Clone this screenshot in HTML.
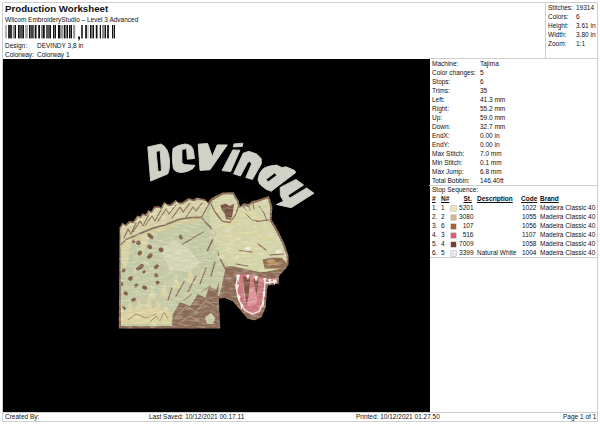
<!DOCTYPE html>
<html><head><meta charset="utf-8">
<style>
html,body{margin:0;padding:0;background:#fff;}
body{width:600px;height:424px;position:relative;overflow:hidden;font-family:"Liberation Sans",sans-serif;color:#111;}
.a{position:absolute;white-space:nowrap;line-height:1;}
.s{font-size:6.5px;}
.u{text-decoration:underline;}
.ln{position:absolute;background:#cfcfcf;}
svg{position:absolute;left:0;top:0;}
</style></head><body>
<div class="ln" style="left:2px;top:2px;width:596px;height:1px"></div>
<div class="ln" style="left:2px;top:2px;width:1px;height:420px"></div>
<div class="ln" style="left:597px;top:2px;width:1px;height:420px"></div>
<div class="ln" style="left:2px;top:421px;width:596px;height:1px"></div>
<div class="a" style="left:5px;top:3.5px;font-size:9.7px;font-weight:bold;">Production Worksheet</div>
<div class="a s" style="left:5px;top:17px;">Wilcom EmbroideryStudio – Level 3 Advanced</div>
<svg width="120" height="42" viewBox="0 0 120 42">
<rect x="5.25" y="25" width="1.5" height="13.4" fill="#999"/>
<rect x="8" y="25" width="4" height="13.4" fill="#333"/>
<rect x="12.75" y="25" width="2" height="13.4" fill="#888"/>
<rect x="14.75" y="25" width="1.25" height="13.4" fill="#111"/>
<rect x="18" y="25" width="1" height="13.4" fill="#111"/>
<rect x="19" y="25" width="4" height="13.4" fill="#555"/>
<rect x="23" y="25" width="1" height="13.4" fill="#111"/>
<rect x="25" y="25" width="3" height="13.4" fill="#aaa"/>
<rect x="29" y="25" width="1.25" height="13.4" fill="#111"/>
<rect x="30.25" y="25" width="2.75" height="13.4" fill="#444"/>
<rect x="33" y="25" width="1.5" height="13.4" fill="#666"/>
<rect x="35" y="25" width="1.5" height="13.4" fill="#111"/>
<rect x="38.25" y="25" width="1.75" height="13.4" fill="#111"/>
<rect x="41" y="25" width="1.75" height="13.4" fill="#888"/>
<rect x="42.75" y="25" width="2" height="13.4" fill="#111"/>
<rect x="46" y="25" width="4" height="13.4" fill="#555"/>
<rect x="50" y="25" width="1" height="13.4" fill="#111"/>
<rect x="53" y="25" width="1" height="13.4" fill="#111"/>
<rect x="54" y="25" width="1" height="13.4" fill="#777"/>
<rect x="55" y="25" width="1" height="13.4" fill="#111"/>
<rect x="58" y="25" width="2" height="13.4" fill="#111"/>
<rect x="60" y="25" width="3" height="13.4" fill="#999"/>
<rect x="63.75" y="25" width="1.25" height="13.4" fill="#111"/>
<rect x="65" y="25" width="2" height="13.4" fill="#777"/>
<rect x="67" y="25" width="1" height="13.4" fill="#111"/>
<rect x="69" y="25" width="1" height="13.4" fill="#111"/>
<rect x="70" y="25" width="1" height="13.4" fill="#666"/>
<rect x="71" y="25" width="1" height="13.4" fill="#111"/>
<rect x="73" y="25" width="2.25" height="13.4" fill="#999"/>
<rect x="81" y="25" width="2" height="13.4" fill="#444"/>
<rect x="85" y="25" width="2" height="13.4" fill="#333"/>
<rect x="87.5" y="25" width="1" height="13.4" fill="#aaa"/>
<rect x="90" y="25" width="1" height="13.4" fill="#111"/>
<rect x="91" y="25" width="2" height="13.4" fill="#777"/>
<rect x="93" y="25" width="1" height="13.4" fill="#111"/>
<rect x="95.75" y="25" width="1.75" height="13.4" fill="#111"/>
<rect x="99.75" y="25" width="1.25" height="13.4" fill="#111"/>
<rect x="102" y="25" width="3" height="13.4" fill="#888"/>
<rect x="105" y="25" width="1" height="13.4" fill="#111"/>
<rect x="107" y="25" width="2" height="13.4" fill="#333"/>
<rect x="112" y="25" width="1" height="13.4" fill="#111"/>
<rect x="113" y="25" width="1" height="13.4" fill="#999"/>
<rect x="114" y="25" width="1" height="13.4" fill="#111"/>
<path d="M78,36.6 h2 v2 q0,1.5 -1.6,2.2 l-0.4,-0.5 q0.8,-0.5 0.9,-1.2 h-0.9 z" fill="#222"/>
</svg>
<div class="a s" style="left:5px;top:42.5px;">Design:</div>
<div class="a s" style="left:37px;top:42.5px;">DEVINDY 3,8 in</div>
<div class="a s" style="left:5px;top:51.5px;">Colorway:</div>
<div class="a s" style="left:37px;top:51.5px;">Colorway 1</div>
<div class="ln" style="left:545px;top:2px;width:1px;height:57px"></div>
<div class="ln" style="left:429px;top:58px;width:169px;height:1px"></div>
<div class="a s" style="left:548px;top:4.5px;">Stitches:</div><div class="a s" style="left:576px;top:4.5px;">19314</div>
<div class="a s" style="left:548px;top:13.5px;">Colors:</div><div class="a s" style="left:576px;top:13.5px;">6</div>
<div class="a s" style="left:548px;top:22.5px;">Height:</div><div class="a s" style="left:576px;top:22.5px;">3.61 in</div>
<div class="a s" style="left:548px;top:31.5px;">Width:</div><div class="a s" style="left:576px;top:31.5px;">3.80 in</div>
<div class="a s" style="left:548px;top:40.5px;">Zoom:</div><div class="a s" style="left:576px;top:40.5px;">1:1</div>
<div style="position:absolute;left:3px;top:59px;width:427px;height:353px;background:#000;"></div>
<svg width="600" height="424" viewBox="0 0 600 424">
<defs>
<filter id="gr" x="100" y="190" width="200" height="140" filterUnits="userSpaceOnUse"><feTurbulence type="fractalNoise" baseFrequency="0.12 0.5" numOctaves="2" seed="11" result="n"/><feColorMatrix in="n" type="matrix" values="0 0 0 0 1  0 0 0 0 1  0 0 0 0 0.9  0 0 0 2.5 -1.1"/><feComposite in2="SourceGraphic" operator="in"/></filter>
<pattern id="st" width="1.6" height="1.6" patternUnits="userSpaceOnUse" patternTransform="rotate(40)"><rect width="1.6" height="0.6" fill="#4d4c30" opacity="0.13"/></pattern>
</defs>
<!-- hyena outer (brown edge) -->
<path fill="#8a6a55" d="M118.8,328.5 L119.5,227.5 L122.5,222.5 L125.0,224.8 L129.5,220.8 L133.0,221.5 L137.5,215.5 L140.0,216.5 L142.5,213.2 L145.5,214.5 L148.3,210.0 L151.0,211.5 L154.2,206.5 L158.3,206.0 L161.0,207.5 L164.2,201.8 L167.0,204.0 L170.0,204.5 L175.8,200.0 L178.0,202.5 L181.7,202.5 L188.3,198.3 L193.3,199.5 L196.7,197.5 L205.0,199.2 L208.0,202.5 L211,198.5 L222.3,192.4 L233.6,192.2 L238.6,200.8 L240,206.5 L244,203 L248,204.5 L252,201 L256.2,200.3 L269,196 L272.4,206.8 L271.5,219.5 L278.8,232 L285,245 L288.4,255.5 L288.6,264.5 L285,269.5 L279,276 L278.6,283.5 L267.7,285.5 L266.5,293 L265.8,306.8 L261.5,317 L254.5,320.3 L247.5,318.6 L239.3,308.5 L232.8,301.2 L224.8,297.8 L218.8,298.6 L220.3,328.5 Z"/>
<!-- body light fill -->
<path fill="#c8cda9" d="M121,326 L120.4,229.5 L123.4,224.5 L125.9,226.8 L130.4,222.8 L133.9,223.5 L138.4,217.5 L140.9,218.5 L143.4,215.2 L146.4,216.5 L149.2,212.0 L151.9,213.5 L155.1,208.5 L159.2,208.0 L161.9,209.5 L165.1,203.8 L167.9,206.0 L170.9,206.5 L176.7,202.0 L178.9,204.5 L182.6,204.5 L189.2,200.3 L194.2,201.5 L197.6,199.5 L205.9,201.2 L208.9,204.5 L212,200.8 L222.8,194.6 L233,194.4 L236.8,201.5 L238.6,208.5 L244,205.5 L248,206.8 L252,203.4 L256.6,202.5 L267.5,198.6 L270.2,207 L269.5,220.5 L277,233.5 L283,246 L286.4,256 L286.5,263.5 L282,268.5 L264,272 L236,270 L230,280 L218,296.5 L217,300 L218.6,326 Z"/>
<!-- mane cream with spikes -->
<path fill="#d9d4aa" d="M121,236 L120.4,229.5 L123.4,224.5 L125.9,226.8 L130.4,222.8 L133.9,223.5 L138.4,217.5 L140.9,218.5 L143.4,215.2 L146.4,216.5 L149.2,212.0 L151.9,213.5 L155.1,208.5 L159.2,208.0 L161.9,209.5 L165.1,203.8 L167.9,206.0 L170.9,206.5 L176.7,202.0 L178.9,204.5 L182.6,204.5 L189.2,200.3 L194.2,201.5 L197.6,199.5 L205.9,201.2 L208.9,204.5 L207,206 L204,216 L191,217.5 L178.9,219.5 L164.7,225 L153.4,228 L139.2,233.8 L126.5,239.6 L121,244 Z"/>
<path fill="none" stroke="#dbd09a" stroke-width="3" d="M121,247.5 L127,243 L140,237.2 L154,231.5 L165,228.5 L179,223 L191,221 L200,221"/>
<!-- mane brown strokes -->
<g fill="none" stroke="#8a6a55" stroke-linecap="round" stroke-linejoin="round">
<path stroke-width="1.6" d="M121,244 L126.5,239.6 L139.2,233.8 L153.4,228 L164.7,225 L178.9,219.5 L191,217.5 L201.5,217.4 L207.2,224 L212.8,229.6 L216,233 L210,245 L207.5,250.5"/>
<path stroke-width="1.1" d="M124,238 L128,229 L131,234 L136,223 M133,232 L140,221 L143,226 L149,214 M145,226 L152,216 L155,221 L161,210 M158,221 L166,209 L169,214 L176,205 M172,218 L180,207 L183,212 L190,203 M186,217 L193,207 L196,211 L202,203"/>
<path stroke-width="1.1" d="M201.5,217.4 L207.2,207 L211,201.3 M203.3,232 L193.4,237.7 L182,244.8"/>
<path stroke-width="1.2" d="M220.3,259 L226,270 L230,284.4 M217,243 L219,256"/>
</g>
<!-- texture -->
<path fill="url(#st)" d="M121,326.5 L121,229 L196,200 L233,194 L270,207 L286,256 L282,268.5 L236,270 L218,296.5 L218.6,326.5 Z"/>
<!-- cream streaks on body -->
<g fill="#dcd4a2" opacity="0.8">
<path d="M122,250 L126,240 L132,238 L128,262 L123,275 Z"/>
<path d="M140,236 L150,232 L146,246 L142,258 Z"/>
<path d="M226,238 L232,236 L236,248 L232,256 Z"/>
<path d="M148,298 L152,285 L156,300 Z M160,296 L165,280 L168,298 Z M172,290 L176,272 L180,288 Z M186,282 L190,266 L194,282 Z"/>
</g>
<g fill="#e2dfc4" opacity="0.5">
<path d="M160,250 L175,240 L190,250 L200,262 L190,272 L170,270 Z"/>
</g>
<!-- spots -->
<g fill="#7d5c48">
<ellipse cx="150.5" cy="236.3" rx="3.9" ry="2.0" transform="rotate(50 150.5 236.3)"/>
<ellipse cx="138.5" cy="242.7" rx="2.4" ry="2.2" transform="rotate(20 138.5 242.7)"/>
<ellipse cx="133.6" cy="241.3" rx="1.8" ry="1.8" transform="rotate(-50 133.6 241.3)"/>
<ellipse cx="149.8" cy="246.9" rx="2.5" ry="1.9" transform="rotate(20 149.8 246.9)"/>
<ellipse cx="139.9" cy="253.3" rx="2.6" ry="1.9" transform="rotate(-50 139.9 253.3)"/>
<ellipse cx="149.8" cy="256.1" rx="3.3" ry="2.0" transform="rotate(-50 149.8 256.1)"/>
<ellipse cx="161.1" cy="249.8" rx="2.3" ry="2.5" transform="rotate(-50 161.1 249.8)"/>
<ellipse cx="139.9" cy="267.4" rx="2.1" ry="4.6" transform="rotate(50 139.9 267.4)"/>
<ellipse cx="156.2" cy="266.7" rx="2.9" ry="1.9" transform="rotate(-35 156.2 266.7)"/>
<ellipse cx="156.2" cy="275.2" rx="2.1" ry="1.8" transform="rotate(35 156.2 275.2)"/>
<ellipse cx="130.6" cy="278.5" rx="2.5" ry="2.0" transform="rotate(-20 130.6 278.5)"/>
<ellipse cx="123.7" cy="270.3" rx="2.1" ry="1.8" transform="rotate(-50 123.7 270.3)"/>
<ellipse cx="157.6" cy="282.5" rx="2.1" ry="1.8" transform="rotate(-35 157.6 282.5)"/>
<ellipse cx="121.8" cy="284.0" rx="1.5" ry="1.9" transform="rotate(-20 121.8 284.0)"/>
<ellipse cx="136.2" cy="285.6" rx="2.4" ry="1.8" transform="rotate(-35 136.2 285.6)"/>
<ellipse cx="144.7" cy="287.7" rx="2.6" ry="1.9" transform="rotate(20 144.7 287.7)"/>
<ellipse cx="125.6" cy="293.3" rx="2.4" ry="1.8" transform="rotate(35 125.6 293.3)"/>
<ellipse cx="133.4" cy="299.7" rx="2.6" ry="1.8" transform="rotate(-20 133.4 299.7)"/>
<ellipse cx="123.5" cy="308.2" rx="2.4" ry="1.9" transform="rotate(35 123.5 308.2)"/>
<ellipse cx="180.7" cy="237.0" rx="2.6" ry="1.8" transform="rotate(50 180.7 237.0)"/>
<ellipse cx="144.0" cy="272.0" rx="1.8" ry="1.4" transform="rotate(-35 144.0 272.0)"/>
</g>
<!-- lower cream flames -->
<g fill="#dad09f">
<path d="M121,324 L121,306 L126,312 L130,300 L134,314 L139,298 L144,312 L149,296 L153,310 L158,299 L162,311 L166,304 L171,315 L171,324 Z"/>
<path d="M124,314 L140,308 L160,313 L170,318 L170,324 L122,324 Z"/>
</g>
<path fill="none" stroke="#a08468" stroke-width="0.9" d="M128,320 L136,314 L146,318 L156,314 M150,322 L156,316 L160,321 L164,312 L168,319"/>
<!-- lower brown shading -->
<path fill="#8a6b57" d="M172,326 L173,314 L180,302 L190.2,306 L197.9,294 L205.5,298 L209,286 L216.3,290 L219,282 L218,296.5 L217,300 L218.6,326 Z"/>
<g fill="none" stroke="#a9906f" stroke-width="1.2" stroke-linecap="round">
<path d="M175,318 L186,306 L196,312 L206,300 L214,306 M178,324 L190,316 L200,322 M184,300 L192,294 M202,292 L210,286"/>
</g>
<g fill="none" stroke="#8a6a55" stroke-width="1.2" stroke-linecap="round">
<path d="M176,296 L184,282 M188,292 L196,276 M200,284 L206,268 M211,276 L215,262 M168,300 L172,288"/>
</g>
<path fill="#c6c9a4" d="M205,317 L211,313 L215,318 L213,324 L207,324 Z"/>
<!-- head lighter cream area -->
<path fill="#d5d3a8" opacity="0.85" d="M209,212 L214,200 L222.8,195 L233,194.8 L238,208 L248,207 L256.6,203 L267.5,199 L270,207 L269.5,220.5 L277,233.5 L283,246 L286.4,256 L286.5,263.5 L282,268.5 L264,272 L236,270 L222,260 L214,244 Z"/>
<g fill="none" stroke="#e0d396" stroke-width="1.5" opacity="0.95" stroke-linecap="round" stroke-linejoin="round">
<path d="M222,240 L230,234 L236,240 L244,232 L252,236 M236,258 L244,252 L250,258 M224,226 L234,221 L240,224 M256,232 L264,240 L272,236 M242,216 L250,212 L258,218 M254,248 L262,243 M216,214 L220,206 M262,226 L270,230 M228,250 L234,246"/>
</g>
<g fill="none" stroke="#8a6a55" stroke-width="1" stroke-linecap="round">
<path d="M242,205 L246,210 M248,204 L250,210 M253,203 L254,209"/>
</g>
<g fill="none" stroke="#8a6a55" stroke-linecap="round" stroke-linejoin="round">
<path stroke-width="1.3" d="M211,204 L215,212 L222,221 L230,222.5 L236,214 L238.5,206"/>
<path stroke-width="1" d="M259,206 L264,213 L267,221 M246,214 L252,220 L258,221"/>
</g>
<!-- ear dark inner -->
<path fill="#7a5442" d="M220.5,205 L226,203.5 L229,206 L234,204 L233,212 L231,220.5 L226,219 L224.5,213 L221.5,210 Z"/>
<g fill="none" stroke="#8a6a55" stroke-width="1.1" stroke-linecap="round">
<path d="M256.2,221.8 L269,219.7 M239.2,250.5 L252,252 M270,255 L284,254 M236,264 L248,266 M258,244 L266,250"/>
</g>
<!-- face features -->
<path fill="#8f6a4e" d="M262.6,259.5 L272,257.5 L282,258 L286.5,263 L283,268.6 L264.7,268.6 Z"/>
<path fill="#b8925e" d="M266,261 L274,260 L278,264 L270,265.5 Z"/>
<path fill="#ecebe0" d="M243.5,248.5 L248,246.3 L252,248.2 L248,250.5 Z"/>
<path fill="#e6e2d0" d="M275.3,250.5 L280,249.2 L282.8,252.5 L277,253.7 Z"/>
<!-- mouth -->
<path fill="#8a6a55" d="M226,266 L231,266 L250,270 L266,274 L279,276 L278.6,283.5 L267.7,285.5 L266.5,293 L265.8,306.8 L261.5,317 L254.5,320.3 L247.5,318.6 L239.3,308.5 L232.8,301.2 L224.8,297.8 L218.8,298.6 L222,285 Z"/>
<path fill="none" stroke="#8a6a55" stroke-width="1.3" d="M220.3,259 L226,270 L224,285 L219,297"/>
<path fill="#c9777d" d="M237.5,274.5 L244,273.5 L253,275 L266,278 L277.5,279 L277.5,282 L266,283.5 L264.5,293 L263.5,305 L259.5,313.5 L252,315.5 L244,311 L238,300 L235.5,287 Z"/>
<path fill="#dd9098" d="M243,287 L252,289 L258,293 L256,304 L249,307 L244,300 Z"/>
<path fill="#7a5442" d="M243,276.5 L250,278 L248.5,297 L246.5,305 L244.5,292 Z M253.5,279 L258.5,280.5 L256.5,296 Z"/>
<path fill="none" stroke="#efece2" stroke-width="1.3" stroke-linejoin="round" d="M237.5,276 L236,287 L238.5,299 L244.5,310 L252,314 L259,311.5 L262.5,304 L264,293 L265,283 L277,281.5"/>
<g fill="#f2efe6">
<path d="M236,275 L240,274.5 L238.5,282 Z M235.5,284 L239,285 L237,291 Z M237,294 L240.5,296 L239,302 Z M240,303 L243.5,305 L241.5,310 Z M262,302 L264.5,300 L263.5,307 Z M262.5,292 L265.5,291 L264.5,298 Z"/>
<path d="M246,275 L249.5,274.5 L248,280 Z M254,276 L258,276 L256,282 Z M263,278 L266.5,278 L265,284 Z M268,279 L271.5,279 L270,285 Z M272.5,279.5 L276.5,279.5 L274.5,285 Z"/>
</g>
<g filter="url(#gr)" opacity="0.35"><path fill="#000" d="M118.8,328.5 L119.5,227.5 L122.5,222.5 L125.0,224.8 L129.5,220.8 L133.0,221.5 L137.5,215.5 L140.0,216.5 L142.5,213.2 L145.5,214.5 L148.3,210.0 L151.0,211.5 L154.2,206.5 L158.3,206.0 L161.0,207.5 L164.2,201.8 L167.0,204.0 L170.0,204.5 L175.8,200.0 L178.0,202.5 L181.7,202.5 L188.3,198.3 L193.3,199.5 L196.7,197.5 L205.0,199.2 L208.0,202.5 L211,198.5 L222.3,192.4 L233.6,192.2 L238.6,200.8 L240,206.5 L244,203 L248,204.5 L252,201 L256.2,200.3 L269,196 L272.4,206.8 L271.5,219.5 L278.8,232 L285,245 L288.4,255.5 L288.6,264.5 L285,269.5 L279,276 L278.6,283.5 L267.7,285.5 L266.5,293 L265.8,306.8 L261.5,317 L254.5,320.3 L247.5,318.6 L239.3,308.5 L232.8,301.2 L224.8,297.8 L218.8,298.6 L220.3,328.5 Z"/></g>
<!-- text -->
<g fill="#d0d2c7" fill-rule="evenodd" stroke="#d0d2c7" stroke-width="0.9" stroke-linejoin="round">
<path d="M147.8,147 L161,144 Q168.5,147.5 169.5,160 Q170,170 167.6,174 L150.6,181 Z M156.1,151.4 L160.2,150.6 L161.5,171 L158,171.4 Z"/>
<path d="M173,148.5 Q177,145 185,144 Q192.5,144.5 193.5,151 L194.5,158.5 L187.3,159.2 L186.6,148.6 L181.9,149.4 L181.9,163 L184.3,164.6 L195,165.3 L193,168.5 Q187,172.5 181,172.5 Q174.5,172 173.3,168 Q171.5,159 173,148.5 Z"/>
<path d="M198.2,144.2 L207.6,143.4 L212.3,156.5 L217.2,144.9 L227.3,144.9 L210,169.8 L200,170.4 Z"/>
<path d="M234,143.9 L242.9,143.2 L242.3,146.4 L233.4,147 Z M232.8,149.9 L240,150.2 L230.6,171.6 L222,170.6 Z"/>
<path d="M243.2,153.2 L248.8,151.3 L256.6,154 L261.3,158.7 L261.3,163.9 L252.4,179.4 L245.8,177.5 L251.6,164 L250,161.2 L247.8,162.2 L240.4,176 L233.6,173.8 Z"/>
<path d="M258,179.4 Q259,172 263.5,168.5 Q267,166 276.5,165.1 L281.8,167.5 L286,166.8 L294.6,170.4 L295.8,172.5 L271.2,191.3 L265.9,189.2 L259.6,184 Z M266.1,179.3 L274.8,172.8 L276.8,175.4 L268.1,182 Z"/>
<path d="M280.1,187.5 L296,179.4 L303.6,185 L288,195.2 L289.6,198.2 L306.6,188 L314,193.2 L291.2,207.7 L276.4,204.5 L283.5,201.3 L280.4,195.5 Z"/>
</g>

</svg>
<div class="a s" style="left:432px;top:60.7px;">Machine:</div><div class="a s" style="left:480px;top:60.7px;">Tajima</div>
<div class="a s" style="left:432px;top:69.7px;">Color changes:</div><div class="a s" style="left:480px;top:69.7px;">5</div>
<div class="a s" style="left:432px;top:78.7px;">Stops:</div><div class="a s" style="left:480px;top:78.7px;">6</div>
<div class="a s" style="left:432px;top:87.7px;">Trims:</div><div class="a s" style="left:480px;top:87.7px;">35</div>
<div class="a s" style="left:432px;top:96.7px;">Left:</div><div class="a s" style="left:480px;top:96.7px;">41.3 mm</div>
<div class="a s" style="left:432px;top:105.7px;">Right:</div><div class="a s" style="left:480px;top:105.7px;">55.2 mm</div>
<div class="a s" style="left:432px;top:114.7px;">Up:</div><div class="a s" style="left:480px;top:114.7px;">59.0 mm</div>
<div class="a s" style="left:432px;top:123.7px;">Down:</div><div class="a s" style="left:480px;top:123.7px;">32.7 mm</div>
<div class="a s" style="left:432px;top:132.7px;">EndX:</div><div class="a s" style="left:480px;top:132.7px;">0.00 in</div>
<div class="a s" style="left:432px;top:141.7px;">EndY:</div><div class="a s" style="left:480px;top:141.7px;">0.00 in</div>
<div class="a s" style="left:432px;top:150.7px;">Max Stitch:</div><div class="a s" style="left:480px;top:150.7px;">7.0 mm</div>
<div class="a s" style="left:432px;top:159.7px;">Min Stitch:</div><div class="a s" style="left:480px;top:159.7px;">0.1 mm</div>
<div class="a s" style="left:432px;top:168.7px;">Max Jump:</div><div class="a s" style="left:480px;top:168.7px;">6.8 mm</div>
<div class="a s" style="left:432px;top:177.7px;">Total Bobbin:</div><div class="a s" style="left:480px;top:177.7px;">146.40ft</div>
<div class="ln" style="left:429px;top:185px;width:169px;height:1px"></div>
<div class="a s" style="left:432px;top:186.9px;">Stop Sequence:</div>
<div class="a s u" style="left:432px;top:195.9px;font-weight:bold;">#</div>
<div class="a s u" style="left:441px;top:195.9px;font-weight:bold;">N#</div>
<div class="a s u" style="left:463.5px;top:195.9px;font-weight:bold;">St.</div>
<div class="a s u" style="left:477px;top:195.9px;font-weight:bold;">Description</div>
<div class="a s u" style="left:521px;top:195.9px;font-weight:bold;">Code</div>
<div class="a s u" style="left:540px;top:195.9px;font-weight:bold;">Brand</div>
<div class="a s" style="left:432px;top:204.9px;">1.</div><div class="a s" style="left:441px;top:204.9px;">1</div>
<div style="position:absolute;left:451px;top:205.7px;width:5px;height:5px;background:#eee4a8;box-shadow:0 0 0 0.5px #aaa;"></div>
<div class="a s" style="left:455px;top:204.9px;width:18.5px;text-align:right;">5201</div>
<div class="a s" style="left:522px;top:204.9px;">1022</div><div class="a s" style="left:540px;top:204.9px;">Madeira Classic 40</div>
<div class="a s" style="left:432px;top:213.9px;">2.</div><div class="a s" style="left:441px;top:213.9px;">2</div>
<div style="position:absolute;left:451px;top:214.7px;width:5px;height:5px;background:#e0b090;box-shadow:0 0 0 0.5px #aaa;"></div>
<div class="a s" style="left:455px;top:213.9px;width:18.5px;text-align:right;">3080</div>
<div class="a s" style="left:522px;top:213.9px;">1055</div><div class="a s" style="left:540px;top:213.9px;">Madeira Classic 40</div>
<div class="a s" style="left:432px;top:222.9px;">3.</div><div class="a s" style="left:441px;top:222.9px;">6</div>
<div style="position:absolute;left:451px;top:223.7px;width:5px;height:5px;background:#a86030;box-shadow:0 0 0 0.5px #aaa;"></div>
<div class="a s" style="left:455px;top:222.9px;width:18.5px;text-align:right;">107</div>
<div class="a s" style="left:522px;top:222.9px;">1056</div><div class="a s" style="left:540px;top:222.9px;">Madeira Classic 40</div>
<div class="a s" style="left:432px;top:231.9px;">4.</div><div class="a s" style="left:441px;top:231.9px;">3</div>
<div style="position:absolute;left:451px;top:232.7px;width:5px;height:5px;background:#e85870;box-shadow:0 0 0 0.5px #aaa;"></div>
<div class="a s" style="left:455px;top:231.9px;width:18.5px;text-align:right;">516</div>
<div class="a s" style="left:522px;top:231.9px;">1107</div><div class="a s" style="left:540px;top:231.9px;">Madeira Classic 40</div>
<div class="a s" style="left:432px;top:240.9px;">5.</div><div class="a s" style="left:441px;top:240.9px;">4</div>
<div style="position:absolute;left:451px;top:241.7px;width:5px;height:5px;background:#7a4030;box-shadow:0 0 0 0.5px #aaa;"></div>
<div class="a s" style="left:455px;top:240.9px;width:18.5px;text-align:right;">7009</div>
<div class="a s" style="left:522px;top:240.9px;">1058</div><div class="a s" style="left:540px;top:240.9px;">Madeira Classic 40</div>
<div class="a s" style="left:432px;top:249.9px;">6.</div><div class="a s" style="left:441px;top:249.9px;">5</div>
<div style="position:absolute;left:451px;top:250.7px;width:5px;height:5px;background:#e8e8f0;box-shadow:0 0 0 0.5px #aaa;"></div>
<div class="a s" style="left:455px;top:249.9px;width:18.5px;text-align:right;">3399</div>
<div class="a s" style="left:477px;top:249.9px;">Natural White</div>
<div class="a s" style="left:522px;top:249.9px;">1004</div><div class="a s" style="left:540px;top:249.9px;">Madeira Classic 40</div>
<div class="ln" style="left:430px;top:257px;width:168px;height:1px"></div>
<div class="ln" style="left:2px;top:412px;width:596px;height:1px"></div>
<div class="a s" style="left:5px;top:413.9px;">Created By:</div>
<div class="a s" style="left:149px;top:413.9px;">Last Saved: 10/12/2021 00.17.11</div>
<div class="a s" style="left:356px;top:413.9px;">Printed: 10/12/2021 01.27.50</div>
<div class="a s" style="left:563px;top:413.9px;">Page 1 of 1</div>
</body></html>
